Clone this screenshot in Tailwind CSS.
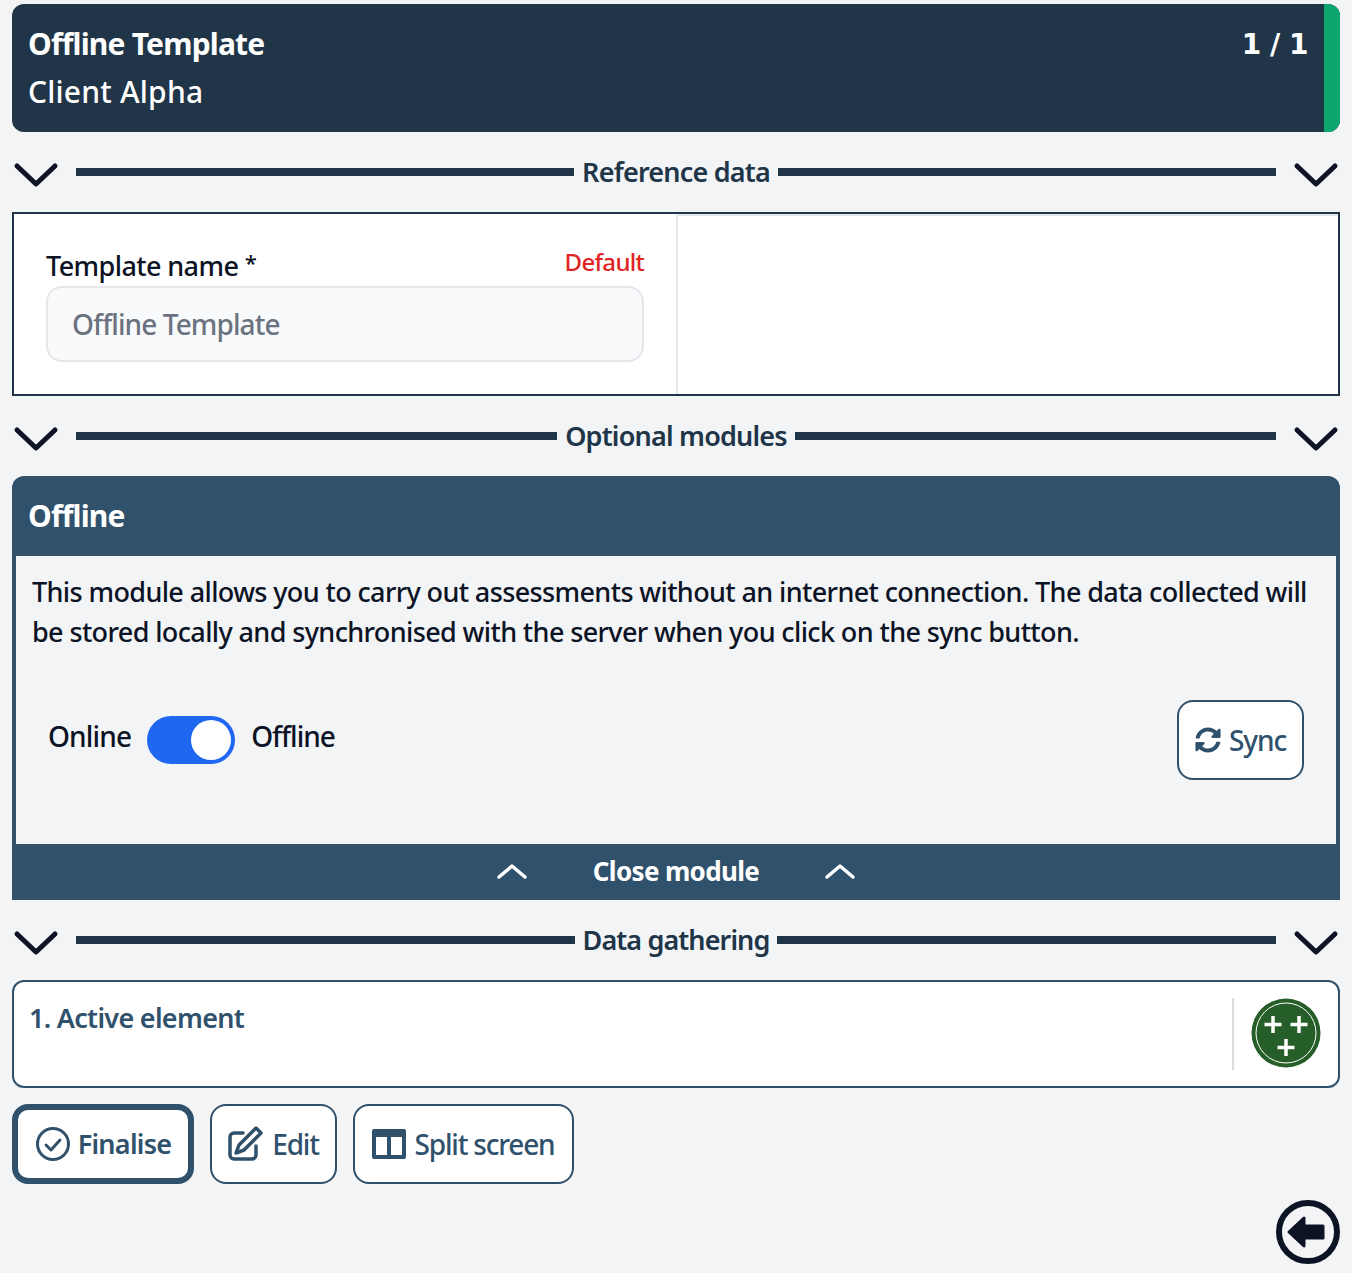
<!DOCTYPE html>
<html lang="en">
<head>
<meta charset="UTF-8">
<title>Offline Template</title>
<script src="https://cdn.jsdelivr.net/npm/@tailwindcss/browser@4"></script>
</head>
<body class="bg-[#f3f4f6] text-[#0b1324] font-['Noto_Sans',sans-serif] text-[28px] h-[1273px] overflow-hidden">
<div class="px-3 pt-1">

  <!-- Header -->
  <header class="h-32 rounded-xl overflow-hidden bg-[#203547] text-white flex">
    <div class="flex-1 pl-4 pr-4 pt-[15px]">
      <div class="flex justify-between items-center h-12">
        <span class="font-bold text-[30px] tracking-[-0.8px]">Offline Template</span>
        <span class="pt-1 font-bold text-[28px] tracking-[-0.5px] font-['DejaVu_Sans',sans-serif]">1 / 1</span>
      </div>
      <div class="h-12 flex items-center text-[30px] font-medium tracking-[0.2px]">Client Alpha</div>
    </div>
    <div class="w-4 bg-[#0ea66f]"></div>
  </header>

  <!-- Reference data -->
  <div class="h-20 flex items-center">
    <svg class="w-12 h-8 ml-[1px]" viewBox="0 0 48 32" fill="none" stroke="#0b1324" stroke-width="5" stroke-linecap="round" stroke-linejoin="round"><path d="M4 10l19 18 19-18"/></svg>
    <div class="h-2 bg-[#203547] flex-1 ml-[15px]"></div>
    <span class="px-2 font-semibold text-[27px] text-[#203547] tracking-[-0.8px]">Reference data</span>
    <div class="h-2 bg-[#203547] flex-1 mr-[15px]"></div>
    <svg class="w-12 h-8 mr-[1px]" viewBox="0 0 48 32" fill="none" stroke="#0b1324" stroke-width="5" stroke-linecap="round" stroke-linejoin="round"><path d="M6 10l19 18 19-18"/></svg>
  </div>

  <section class="h-[184px] border-2 border-[#203547] bg-white flex">
    <div class="w-[662px] pt-[30px] pl-8 pr-8">
      <div class="flex justify-between h-[42px]">
        <span class="text-[27px] font-medium tracking-[-0.6px] pt-[2px]">Template name <span class="text-[22px] align-top">*</span></span>
        <span class="text-[24px] font-medium text-[#e02424] tracking-[-0.7px]">Default</span>
      </div>
      <div class="h-[76px] rounded-2xl border-2 border-[#e5e7eb] bg-[#f9fafb] flex items-center pl-6 text-[#6b7280] font-medium tracking-[-0.9px]">Offline Template</div>
    </div>
    <div class="flex-1 border-l-2 border-t-2 border-[#e5e7eb]"></div>
  </section>

  <!-- Optional modules -->
  <div class="h-20 flex items-center">
    <svg class="w-12 h-8 ml-[1px]" viewBox="0 0 48 32" fill="none" stroke="#0b1324" stroke-width="5" stroke-linecap="round" stroke-linejoin="round"><path d="M4 10l19 18 19-18"/></svg>
    <div class="h-2 bg-[#203547] flex-1 ml-[15px]"></div>
    <span class="px-2 font-semibold text-[27px] text-[#203547] tracking-[-0.8px]">Optional modules</span>
    <div class="h-2 bg-[#203547] flex-1 mr-[15px]"></div>
    <svg class="w-12 h-8 mr-[1px]" viewBox="0 0 48 32" fill="none" stroke="#0b1324" stroke-width="5" stroke-linecap="round" stroke-linejoin="round"><path d="M6 10l19 18 19-18"/></svg>
  </div>

  <section class="rounded-t-xl overflow-hidden">
    <div class="h-20 pb-[2px] bg-[#30516c] text-white flex items-center pl-4 font-bold text-[30px] tracking-[-0.8px]">Offline</div>
    <div class="h-[288px] border-x-4 border-[#30516c] pt-4 pl-4 pr-2">
      <p class="leading-10 text-[27px] font-medium tracking-[-0.62px] whitespace-nowrap">This module allows you to carry out assessments without an internet connection. The data collected will<br>be stored locally and synchronised with the server when you click on the sync button.</p>
      <div class="flex justify-between mt-[48px] pr-6">
        <div class="flex items-center h-12 mt-4 pl-4">
          <span class="pb-2 font-medium tracking-[-0.85px]">Online</span>
          <span class="relative ml-4 w-[88px] h-12 rounded-full bg-[#1f67f1]">
            <span class="absolute left-11 top-1 w-10 h-10 rounded-full bg-white"></span>
          </span>
          <span class="pb-2 ml-4 font-medium tracking-[-1px]">Offline</span>
        </div>
        <button class="h-20 w-[127px] rounded-2xl border-2 border-[#30516c] bg-white text-[#30516c] font-medium flex items-center justify-center gap-2 tracking-[-1.100px]">
          <svg class="w-[26px] h-[26px]" viewBox="0 0 512 512" fill="currentColor"><path d="M370.7 133.3C339.5 104 298.9 88 255.800 88c-77.500.1-144.300 53.200-162.800 126.900-1.300 5.400-6.100 9.200-11.700 9.200H24.100c-7.500 0-13.200-6.800-11.800-14.200C33.900 94.900 134.800 8 256 8c66.400 0 126.800 26.100 171.300 68.700L463 41C478.100 25.900 504 36.600 504 57.900V192c0 13.300-10.700 24-24 24H345.900c-21.400 0-32.100-25.900-17-41l41.800-41.700zM32 296h134.100c21.400 0 32.100 25.900 17 41l-41.800 41.800c31.300 29.300 71.800 45.300 114.900 45.200 77.400-.1 144.300-53.100 162.800-126.800 1.300-5.400 6.100-9.200 11.700-9.200h57.300c7.500 0 13.200 6.800 11.800 14.200C478.100 417.100 377.200 504 256 504c-66.400 0-126.800-26.100-171.300-68.700L49 471C33.900 486.100 8 475.400 8 454.100V320c0-13.300 10.700-24 24-24z"/></svg>
          Sync
        </button>
      </div>
    </div>
    <div class="h-14 pb-px bg-[#30516c] text-white flex items-center justify-center font-bold text-[26px] tracking-[-0.65px]">
      <svg class="w-8 h-5 -mt-[2px]" viewBox="0 0 32 20" fill="none" stroke="currentColor" stroke-width="3.500" stroke-linecap="round" stroke-linejoin="round"><path d="M3 16L16 5l13 11"/></svg>
      <span class="w-[296px] text-center">Close module</span>
      <svg class="w-8 h-5 -mt-[2px]" viewBox="0 0 32 20" fill="none" stroke="currentColor" stroke-width="3.500" stroke-linecap="round" stroke-linejoin="round"><path d="M3 16L16 5l13 11"/></svg>
    </div>
  </section>

  <!-- Data gathering -->
  <div class="h-20 flex items-center">
    <svg class="w-12 h-8 ml-[1px]" viewBox="0 0 48 32" fill="none" stroke="#0b1324" stroke-width="5" stroke-linecap="round" stroke-linejoin="round"><path d="M4 10l19 18 19-18"/></svg>
    <div class="h-2 bg-[#203547] flex-1 ml-[15px]"></div>
    <span class="px-2 font-semibold text-[27px] text-[#203547] tracking-[-0.9px]">Data gathering</span>
    <div class="h-2 bg-[#203547] flex-1 mr-[15px]"></div>
    <svg class="w-12 h-8 mr-[1px]" viewBox="0 0 48 32" fill="none" stroke="#0b1324" stroke-width="5" stroke-linecap="round" stroke-linejoin="round"><path d="M6 10l19 18 19-18"/></svg>
  </div>

  <section class="h-[108px] rounded-xl border-2 border-[#30516c] bg-white flex justify-between pl-[15px] pr-[17px] pt-4">
    <span class="font-semibold text-[27px] text-[#30516c] tracking-[-0.7px]">1. Active element</span>
    <div class="flex items-start gap-[17px]">
      <div class="w-[2px] h-[72px] bg-[#d9dbe0]"></div>
      <svg class="w-[70px] h-[70px]" viewBox="0 0 70 70">
        <circle cx="35" cy="35" r="34.500" fill="#255e28"/>
        <circle cx="35" cy="35" r="30" fill="none" stroke="#fff" stroke-width="1"/>
        <path d="M22 18v17M13.500 26.500h17M48 18v17M39.500 26.500h17M35 41v17M26.500 49.500h17" stroke="#fff" stroke-width="3.500"/>
      </svg>
    </div>
  </section>

  <!-- Actions -->
  <div class="flex gap-4 mt-4">
    <button class="h-20 w-[182px] rounded-2xl border-[6px] border-[#30516c] bg-white text-[#30516c] font-semibold text-[27px] flex items-center justify-center gap-[7px] tracking-[-0.75px]">
      <svg class="w-9 h-9" viewBox="0 0 36 36" fill="none" stroke="currentColor" stroke-width="3" stroke-linecap="round" stroke-linejoin="round"><circle cx="18" cy="18" r="15.500"/><path d="M11 19l5 5 9-10"/></svg>
      Finalise
    </button>
    <button class="h-20 w-[127px] rounded-2xl border-2 border-[#30516c] bg-white text-[#30516c] font-medium flex items-center justify-center gap-[9px] tracking-[-1.200px]">
      <svg class="w-9 h-9 -ml-px" viewBox="0 0 36 36" fill="none" stroke="currentColor" stroke-width="3.500" stroke-linecap="round" stroke-linejoin="round"><path d="M16 7H7a4 4 0 0 0-4 4v18a4 4 0 0 0 4 4h18a4 4 0 0 0 4-4v-9"/><path d="M29 2l5 5-17 17-8 3 3-8z"/></svg>
      Edit
    </button>
    <button class="h-20 w-[221px] rounded-2xl border-2 border-[#30516c] bg-white text-[#30516c] font-medium flex items-center justify-center gap-[9px] tracking-[-1.200px]">
      <svg class="w-[34px] h-8 -ml-px" viewBox="0 0 34 32"><path fill="currentColor" fill-rule="evenodd" d="M2 1h30a2 2 0 0 1 2 2v26a2 2 0 0 1-2 2H2a2 2 0 0 1-2-2V3a2 2 0 0 1 2-2zM4 9v18h11V9zm15 0v18h11V9z"/></svg>
      Split screen
    </button>
  </div>

  <div class="flex justify-end mt-4">
    <svg class="w-16 h-16" viewBox="0 0 64 64"><circle cx="32" cy="32" r="29" fill="none" stroke="#0b1324" stroke-width="6"/><path fill="#0b1324" stroke="#0b1324" stroke-width="3" stroke-linejoin="round" d="M13 32l15-14v8h19v12H28v8z"/></svg>
  </div>

</div>
</body>
</html>
